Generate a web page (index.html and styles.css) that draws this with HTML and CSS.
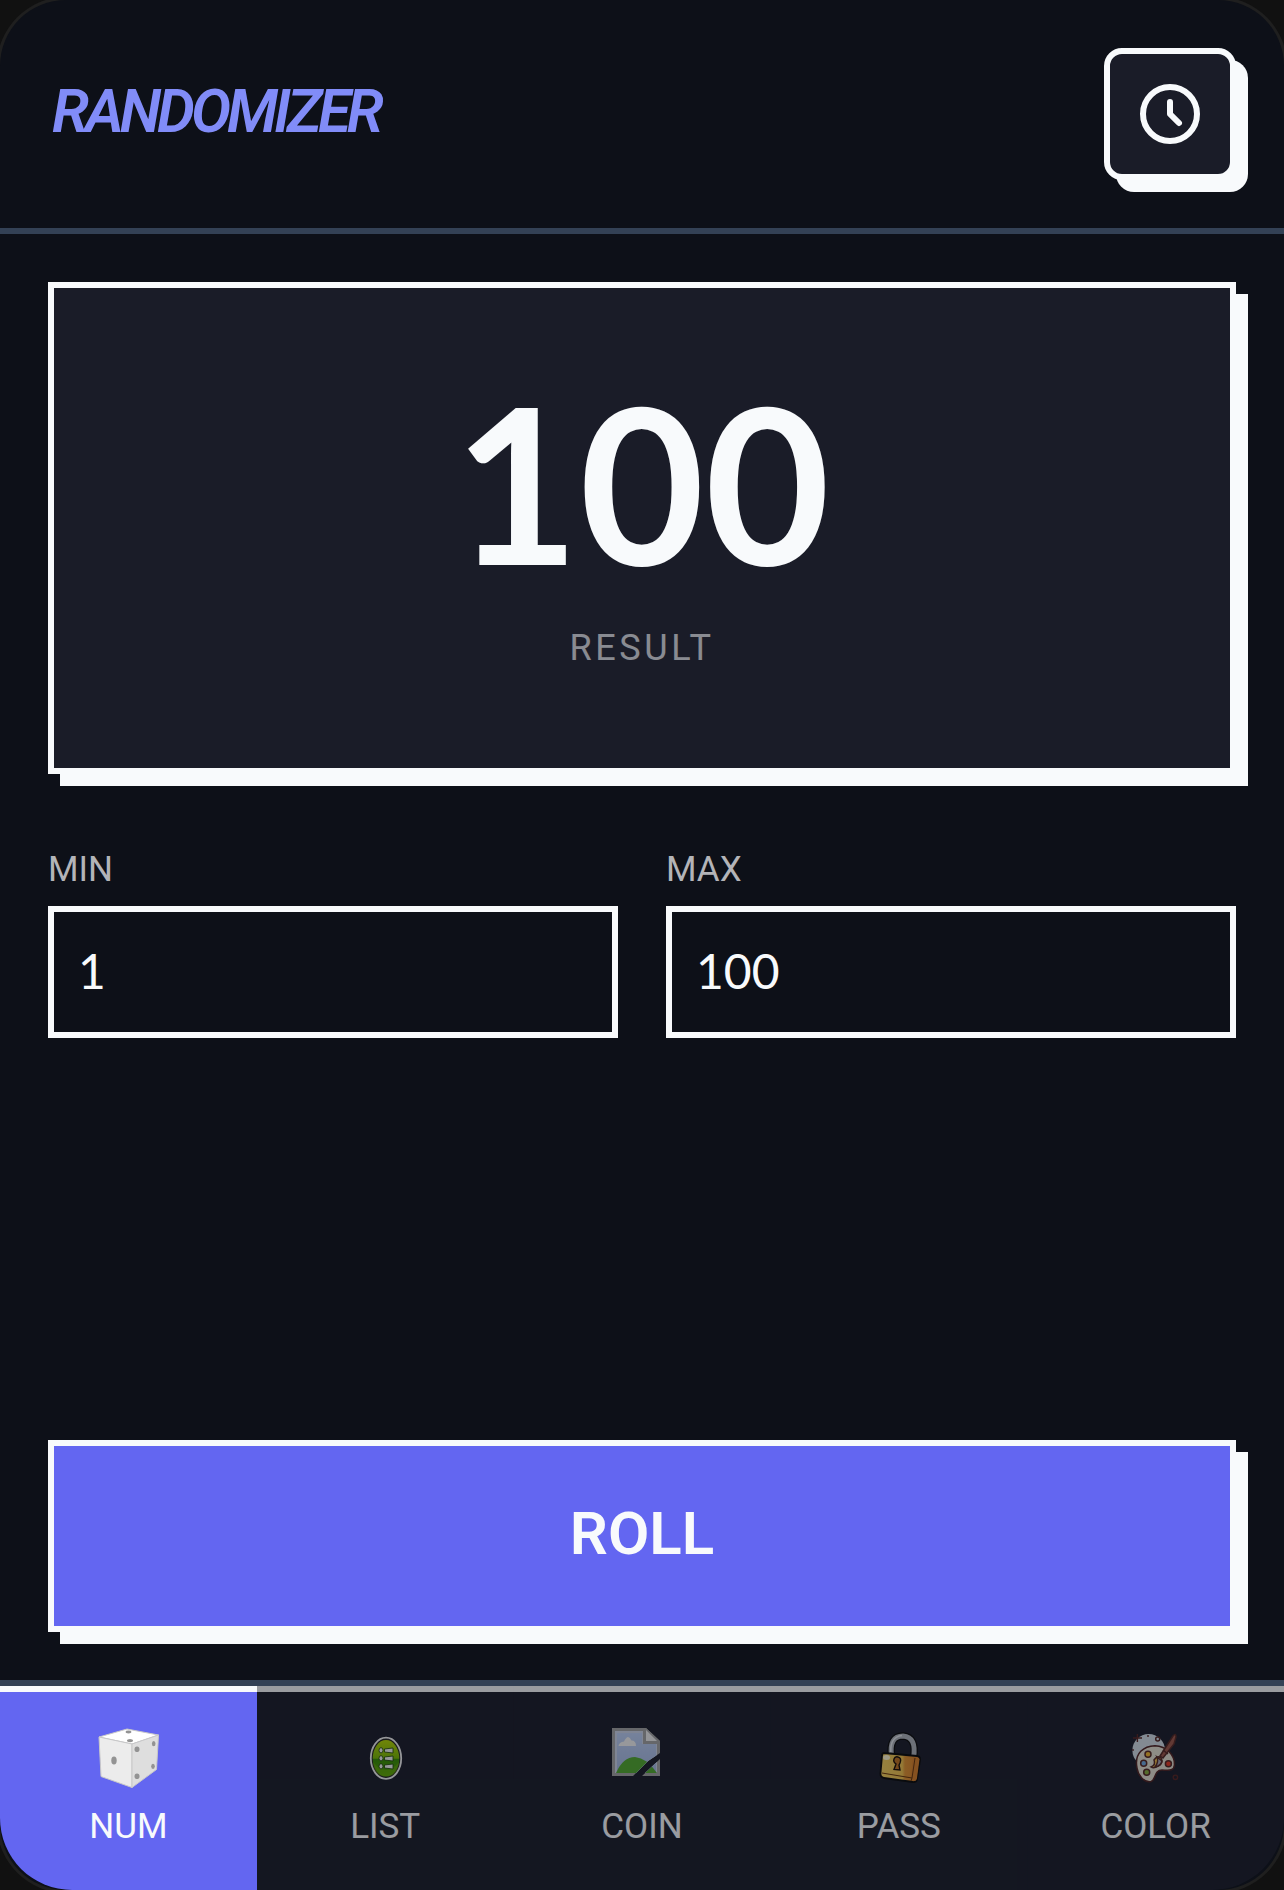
FILE: index.html
```html
<!DOCTYPE html>
<html lang="en">
<head>
<meta charset="utf-8">
<meta name="viewport" content="width=device-width, initial-scale=1">
<title>Randomizer</title>
<link rel="stylesheet" href="styles.css">
</head>
<body>
<div class="app">
  <header class="header">
    <h1 class="brand">RANDOMIZER</h1>
    <button class="history" type="button" aria-label="History">
      <svg viewBox="0 0 24 24" fill="none" stroke="currentColor" stroke-width="2" stroke-linecap="round" stroke-linejoin="round"><circle cx="12" cy="12" r="9"/><path d="M12 8v4l3 3"/></svg>
    </button>
  </header>

  <main class="main">
    <section class="result">
      <output class="result-value" for="min max">100</output>
      <span class="result-label">RESULT</span>
    </section>
    <div class="fields">
      <div class="field">
        <label for="min">MIN</label>
        <input id="min" type="text" inputmode="numeric" value="1">
      </div>
      <div class="field">
        <label for="max">MAX</label>
        <input id="max" type="text" inputmode="numeric" value="100">
      </div>
    </div>
    <button class="roll" type="button">ROLL</button>
  </main>

  <nav class="tabs">
    <button class="tab tab-active" type="button" aria-current="page">
      <svg viewBox="0 0 72 72">
        <g stroke="#c8c8c8" stroke-linejoin="round">
          <path d="M7 15 35 7 66.500 13 40 22Z" fill="#fff"/>
          <path d="M7 15 40 22V65.500L9 54.500Z" fill="#ececec"/>
          <path d="M40 22 66.500 13 64.500 47.500 40 65.500Z" fill="#dedede"/>
        </g>
        <g fill="#939393">
          <ellipse cx="36.500" cy="10" rx="3" ry="1.400"/><ellipse cx="38" cy="18.600" rx="3" ry="1.600"/>
          <ellipse cx="22" cy="38.600" rx="2.700" ry="4"/>
          <ellipse cx="45" cy="27.300" rx="2.500" ry="2.800"/><ellipse cx="61.700" cy="21.700" rx="1.800" ry="2.600"/>
          <ellipse cx="61" cy="44.300" rx="1.800" ry="2.600"/><ellipse cx="45" cy="54.300" rx="2.500" ry="2.800"/>
        </g>
      </svg>
      <span>NUM</span>
    </button>
    <button class="tab" type="button">
      <svg viewBox="0 0 72 72">
        <defs>
          <linearGradient id="leaf" x1="0" y1="0" x2="0" y2="1"><stop offset="0" stop-color="#b3d400"/><stop offset=".5" stop-color="#78b800"/><stop offset=".52" stop-color="#348b00"/><stop offset="1" stop-color="#4f9f00"/></linearGradient>
        </defs>
        <ellipse cx="37" cy="36.300" rx="15.200" ry="20.600" fill="#222" stroke="#f0f0f0" stroke-width="1.800"/>
        <ellipse cx="37" cy="36.300" rx="13.300" ry="18.200" fill="url(#leaf)"/>
        <path d="M24 40Q37 56 50 40Q49 55 37 54.500Q25 55 24 40Z" fill="#8cc500" opacity=".3"/>
        <g fill="#f2f4ee" stroke="#163c00" stroke-width=".8">
          <ellipse cx="32" cy="28.300" rx="2" ry="2.600"/><path d="m35.500 27 8.500-1v5l-8.500-1Z"/>
          <ellipse cx="32" cy="36.300" rx="2" ry="2.600"/><path d="m35.500 35 8.500-1v5l-8.500-1Z"/>
          <ellipse cx="32" cy="44.300" rx="2" ry="2.600"/><path d="m35.500 43 8.500-1v5l-8.500-1Z"/>
        </g>
      </svg>
      <span>LIST</span>
    </button>
    <button class="tab" type="button">
      <svg viewBox="0 0 72 72">
        <defs>
          <clipPath id="torn"><path d="M6 6H40L54 19V31L42 39 27 54H6ZM54 37V54H36Z"/></clipPath>
          <linearGradient id="sky" x1="0" y1="0" x2="0" y2="1"><stop offset="0" stop-color="#bccff4"/><stop offset="1" stop-color="#a5b8e2"/></linearGradient>
        </defs>
        <g clip-path="url(#torn)">
          <path d="M6 6H54V54H6Z" fill="#a2a2a2"/>
          <path d="M9 9H37V21H51V51H9Z" fill="#cbd4e8"/>
          <path d="M11 11H36V22H50V51H11Z" fill="url(#sky)"/>
          <path d="M12.500 24Q13 20 18 19.500Q22 11 25.500 18.500Q30 18.500 30 24Z" fill="#f3f3f3"/>
          <path d="M10 51Q17 35 29 35Q41 36 51 51Z" fill="#50a92e"/>
          <path d="M37 6H42L54 18V22H37Z" fill="#a2a2a2"/><path d="M40 8 51 19H40Z" fill="#eee"/>
        </g>
      </svg>
      <span>COIN</span>
    </button>
    <button class="tab" type="button">
      <svg viewBox="0 0 72 72">
        <defs><linearGradient id="brass" x1="0" y1="0" x2="1" y2="0"><stop offset="0" stop-color="#f3d05c"/><stop offset=".55" stop-color="#efc04c"/><stop offset=".62" stop-color="#e0912f"/><stop offset="1" stop-color="#d77b24"/></linearGradient></defs>
        <path d="M28.500 34Q26 14 40 14Q54 15 50.500 36" fill="none" stroke="#090909" stroke-width="7.500"/>
        <path d="M28.500 34Q26 14 40 14Q54 15 50.500 36" fill="none" stroke="#aeb2b9" stroke-width="5"/>
        <path d="M27.800 30Q27 15 39 13.500" fill="none" stroke="#e1e5e9" stroke-width="1.600"/>
        <path d="M21 31 54 34Q57.500 34.500 57 38L54 57Q53.500 60.500 50 60L21 56Q17 55 17.500 51L19 34Q19 31 21 31Z" fill="url(#brass)" stroke="#080808" stroke-width="1.800"/>
        <path d="M50 35 47.500 58 52 59Q53.500 59 54 56L56.500 37Q56 35 50 35Z" fill="#d67d27"/>
        <path d="M19 51 49 56 52 36M49 56 48 59" fill="none" stroke="#653408" stroke-width="1"/>
        <ellipse cx="23.500" cy="35.500" rx="3.500" ry="2.500" fill="#fff7cf"/>
        <path d="M31 37Q32 34 35 35Q39 36 37 41L36 43 37 48 31 47.500 33 42Q30 40 31 37Z" fill="#bd701f" stroke="#160b02" stroke-width="1.400"/>
      </svg>
      <span>PASS</span>
    </button>
    <button class="tab" type="button">
      <svg viewBox="0 0 72 72">
        <circle cx="28.700" cy="28.300" r="16.300" fill="#d3dde5"/>
        <path d="M17 46C14 31 24 24 35 23.700C47 24 55 34 54.400 43C54 50 47 48 42 48C34 48 36 58 31 59.500C24 61 18 53 17 46Z" fill="#e4dfd1" stroke="#4e2020" stroke-width="1.500"/>
        <g stroke="#532622" stroke-width="1.500">
          <circle cx="28" cy="32.300" r="3" fill="#f0b52d"/><circle cx="23.700" cy="41.300" r="3" fill="#6ea7e0"/>
          <circle cx="26.700" cy="50.300" r="3" fill="#84a83a"/><circle cx="48.400" cy="41.700" r="3" fill="#e33a24"/>
          <path d="M31 45Q36 43 34 38Q37 33 41 36Q44 41 38 44Q34 47 31 45Z" fill="#f0bd47"/>
          <path d="M37 35 42 39Q41 44 35 45Q39 40 37 35Z" fill="#a9a5b5"/>
          <path d="M40 34 53 14Q56 10.500 56 15L54 22 43 36Z" fill="#9c5548"/>
          <path d="m43 28 5 4" fill="none"/>
          <circle cx="37.700" cy="17" r="2" fill="#d3dde5"/>
        </g>
        <g fill="none" stroke="#562321" stroke-width="1.400">
          <circle cx="55.400" cy="55.300" r="2.200"/><path d="M17.400 12V20M13 16H22M28 13V15M13 27V29"/>
        </g>
      </svg>
      <span>COLOR</span>
    </button>
  </nav>
</div>
</body>
</html>
```
FILE: styles.css
```css
:root {
  --bg: #0d1018;
  --surface: #1a1c28;
  --line: #f8fafc;
  --rule: #334155;
  --accent: #6366f1;
  --text-font: Roboto, "Liberation Sans", sans-serif;
  --digit-font: Lato, "Liberation Sans", sans-serif;
}

* { box-sizing: border-box; }

body {
  margin: 0;
  background: #111;
  color: var(--line);
  font-family: var(--text-font);
}

button, input { font: inherit; color: inherit; margin: 0; }
button { cursor: pointer; }

.app {
  display: flex;
  flex-direction: column;
  min-height: 100vh;
  overflow: hidden;
  background: var(--bg);
  border-radius: 66px;
  box-shadow: 0 0 0 3px #1f1f1f;
}

.header {
  display: flex;
  align-items: center;
  justify-content: space-between;
  padding: 48px;
  border-bottom: 6px solid var(--rule);
}

.brand {
  margin: 0;
  padding: 0 4px 4px;
  color: #818cf8;
  font-size: 60px;
  font-style: italic;
  font-weight: 600;
  line-height: 72px;
  letter-spacing: -4px;
}

.history {
  display: grid;
  place-items: center;
  width: 132px;
  height: 132px;
  padding: 0;
  background: var(--surface);
  border: 6px solid var(--line);
  border-radius: 18px;
  box-shadow: 12px 12px 0 var(--line);
}

.history svg { width: 72px; height: 72px; }

.main {
  flex: 1;
  display: flex;
  flex-direction: column;
  padding: 48px;
}

.result {
  display: flex;
  flex-direction: column;
  align-items: center;
  justify-content: center;
  gap: 28px;
  padding: 80px 48px 96px;
  background: var(--surface);
  border: 6px solid var(--line);
  box-shadow: 12px 12px 0 var(--line);
}

.result-value {
  font-family: var(--digit-font);
  font-size: 216px;
  font-weight: 700;
  line-height: 228px;
}

.result-label {
  font-size: 36px;
  line-height: 48px;
  letter-spacing: 0.1em;
  opacity: 0.5;
}

.fields {
  display: grid;
  grid-template-columns: 1fr 1fr;
  gap: 48px;
  margin: 72px 0;
}

.field {
  display: flex;
  flex-direction: column;
  gap: 12px;
}

.field label {
  color: #b3b4b8;
  font-size: 35px;
  line-height: 48px;
}

.field input {
  width: 100%;
  height: 132px;
  padding: 0 24px 4px;
  background: var(--bg);
  border: 6px solid var(--line);
  border-radius: 0;
  font-family: var(--digit-font);
  font-size: 48px;
}

.roll {
  margin-top: auto;
  padding: 52px 54px 56px;
  background: var(--accent);
  border: 6px solid var(--line);
  box-shadow: 12px 12px 0 var(--line);
  font-size: 60px;
  font-weight: 600;
  line-height: 72px;
}

.tabs {
  display: grid;
  grid-template-columns: repeat(5, 1fr);
  overflow: hidden;
  border-top: 6px solid var(--rule);
  border-radius: 0 0 72px 72px;
}

.tab {
  display: flex;
  flex-direction: column;
  align-items: center;
  gap: 12px;
  padding: 30px 0 42px;
  background: var(--surface);
  border: 0;
  border-top: 6px solid var(--line);
  font-size: 35px;
  line-height: 42px;
  opacity: 0.6;
}

.tab svg { width: 72px; height: 72px; }

.tab-active {
  background: var(--accent);
  opacity: 1;
}
```
